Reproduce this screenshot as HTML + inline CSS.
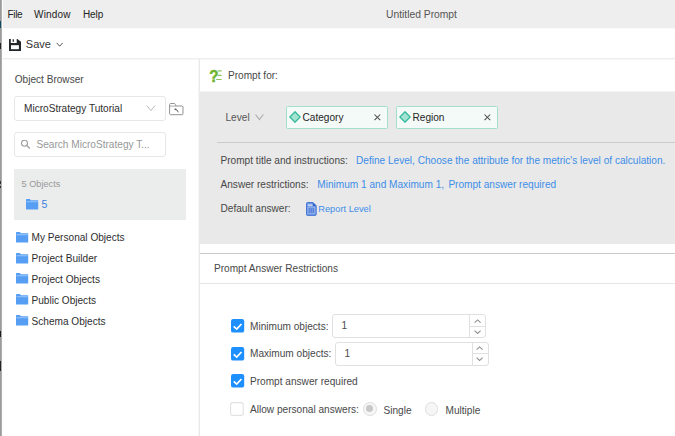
<!DOCTYPE html>
<html><head><meta charset="utf-8"><title>Untitled Prompt</title>
<style>
html,body{margin:0;padding:0;}
body{width:675px;height:436px;overflow:hidden;background:#fff;position:relative;font-family:"Liberation Sans",Arial,sans-serif;font-size:10px;color:#484848;}
.a{position:absolute;white-space:nowrap;}
.t{position:absolute;white-space:nowrap;line-height:12px;font-size:10.1px;}
.blue{color:#3d8de8;}
.dk{color:#2e2e2e;}
.box{position:absolute;box-sizing:border-box;border:1px solid #e7e7e7;border-radius:3px;background:#fff;}
.chip{position:absolute;box-sizing:border-box;border:1px solid #a4dfca;border-radius:1.5px;background:#f4faf8;}
.cb{position:absolute;box-sizing:border-box;width:14px;height:14px;border-radius:2px;background:#1b8cf8;}
</style></head><body>
<!-- menu bar -->
<div class="a" style="left:3px;top:0;width:672px;height:28px;background:#eeeeee;"></div><div class="a" style="left:3px;top:28px;width:672px;height:1px;background:#fafafa;"></div>
<div class="t" id="m1" style="left:7.5px;top:9px;font-size:10px;color:#222;letter-spacing:-0.35px;">File</div>
<div class="t" id="m2" style="left:34px;top:9px;font-size:10px;color:#222;letter-spacing:0.2px;">Window</div>
<div class="t" id="m3" style="left:83px;top:9px;font-size:10px;color:#222;letter-spacing:-0.1px;">Help</div>
<div class="t" id="ttl" style="left:386px;top:9px;font-size:10.3px;color:#555;">Untitled Prompt</div>
<!-- toolbar -->
<div class="a" style="left:2px;top:58px;width:673px;height:1px;background:#ededed;"></div><div class="a" style="left:2px;top:59px;width:673px;height:1px;background:#f8f8f8;"></div>
<svg class="a" style="left:9px;top:38.5px;" width="12" height="12" viewBox="0 0 12 12"><path d="M0 0H8.4L12 2.8V12H0Z" fill="#24272a"/><rect x="1.8" y="-0.2" width="5.9" height="4.2" fill="#fff"/><rect x="3.6" y="0.3" width="1.4" height="2.5" fill="#3a3d40"/><rect x="2" y="6.2" width="7.9" height="4" fill="#fff"/></svg>
<div class="t" id="save" style="left:25.8px;top:38px;font-size:11px;color:#333;">Save</div>
<svg class="a" style="left:56.2px;top:42.3px;" width="8" height="6" viewBox="0 0 8 6"><path d="M0.7 0.9L3.7 4.2L6.7 0.9" fill="none" stroke="#555" stroke-width="1"/></svg>
<!-- left edge -->
<div class="a" style="left:0;top:0;width:1px;height:436px;background:#9b9b9b;"></div><div class="a" style="left:1px;top:0;width:1px;height:436px;background:#adadad;"></div><div class="a" style="left:2px;top:0;width:1px;height:436px;background:#fdfdfd;"></div>
<div class="a" style="left:0;top:21px;width:1px;height:7px;background:#0f4b60;"></div>
<div class="a" style="left:0;top:43px;width:1px;height:6px;background:#222;"></div>
<div class="a" style="left:0;top:181px;width:1px;height:3px;background:#333;"></div>
<div class="a" style="left:0;top:186px;width:1px;height:2px;background:#333;"></div>
<div class="a" style="left:0;top:331px;width:1px;height:6px;background:#1c1c1c;"></div>
<div class="a" style="left:0;top:361px;width:1px;height:10px;background:#222;"></div>
<!-- sidebar -->
<div class="a" style="left:198px;top:59px;width:1px;height:377px;background:#f6f6f6;"></div><div class="a" style="left:199px;top:59px;width:1px;height:377px;background:#e9e9e9;"></div>
<div class="t" id="ob" style="left:14.7px;top:74px;">Object Browser</div>
<div class="box" style="left:14px;top:96px;width:152px;height:25px;"></div>
<div class="t dk" id="mst" style="left:24px;top:103px;">MicroStrategy Tutorial</div>
<svg class="a" style="left:146px;top:105.4px;" width="10" height="7" viewBox="0 0 10 7"><path d="M0.8 0.6L4.9 5.6L9 0.6" fill="none" stroke="#bbb" stroke-width="1"/></svg>
<svg class="a" style="left:169px;top:102.5px;" width="15" height="13" viewBox="0 0 15 13"><path d="M0.6 1.5q0-1 1-1h3.6q0.8 0 1.2 0.9l0.6 1.6h6q1 0 1 1v6.7q0 1-1 1H1.6q-1 0-1-1z" fill="none" stroke="#939393" stroke-width="1"/><path d="M0.6 3.1H7" fill="none" stroke="#939393" stroke-width="0.8"/><path d="M5.6 6.3q3-0.3 3.6 3" fill="none" stroke="#666" stroke-width="1"/><path d="M5.3 6.3l1.8-1.3v2.6z" fill="#666"/></svg>
<div class="box" style="left:14px;top:132px;width:152px;height:25px;"></div>
<svg class="a" style="left:21px;top:140px;" width="10" height="10" viewBox="0 0 10 10"><circle cx="3.5" cy="3.2" r="3" fill="none" stroke="#9c9c9c" stroke-width="1.1"/><path d="M5.7 5.4L8.8 8.5" stroke="#9c9c9c" stroke-width="1.3"/></svg>
<div class="t" id="srch" style="left:36.5px;top:139px;color:#989898;">Search MicroStrategy T...</div>
<div class="a" style="left:14px;top:169px;width:172px;height:51px;background:#ebecec;"></div>
<div class="t" id="o5" style="left:21.5px;top:178px;font-size:9.2px;color:#999;">5 Objects</div>
<div class="t" id="n5" style="left:41.5px;top:198px;font-size:10.5px;color:#3a7fe0;">5</div>
<!-- folders -->
<svg width="0" height="0" style="position:absolute"><defs><g id="fld"><path d="M0 0.7q0-0.7 0.7-0.7h2.9q0.6 0 0.8 0.5l0.3 0.7h6.9q0.6 0 0.6 0.6v8.2q0 0.5-0.5 0.5H0.5q-0.5 0-0.5-0.5z" fill="#559ef4"/><rect x="0.5" y="2" width="11.2" height="1.3" fill="#8abcf7"/></g></defs></svg>
<svg class="a" style="left:25.9px;top:198.6px;" width="13" height="11" viewBox="0 0 13 11"><use href="#fld"/></svg>
<svg class="a" style="left:15.9px;top:231.5px;" width="13" height="11" viewBox="0 0 13 11"><use href="#fld"/></svg>
<svg class="a" style="left:15.9px;top:252.5px;" width="13" height="11" viewBox="0 0 13 11"><use href="#fld"/></svg>
<svg class="a" style="left:15.9px;top:273.4px;" width="13" height="11" viewBox="0 0 13 11"><use href="#fld"/></svg>
<svg class="a" style="left:15.9px;top:294.4px;" width="13" height="11" viewBox="0 0 13 11"><use href="#fld"/></svg>
<svg class="a" style="left:15.9px;top:315.3px;" width="13" height="11" viewBox="0 0 13 11"><use href="#fld"/></svg>
<div class="t dk" id="f1" style="left:31.5px;top:232px;">My Personal Objects</div>
<div class="t dk" id="f2" style="left:31.5px;top:253px;">Project Builder</div>
<div class="t dk" id="f3" style="left:31.5px;top:274px;">Project Objects</div>
<div class="t dk" id="f4" style="left:31.5px;top:295px;">Public Objects</div>
<div class="t dk" id="f5" style="left:31.5px;top:316px;">Schema Objects</div>
<!-- main -->
<svg class="a" style="left:210px;top:69.5px;overflow:visible" width="12" height="13" viewBox="0 0 12 13"><text x="-0.9" y="11.9" font-family="Liberation Sans, Arial, sans-serif" font-weight="bold" font-size="16.5" fill="#6cb52f" stroke="#6cb52f" stroke-width="0.5" transform="scale(0.92,1)">?</text><path d="M8 0.9H11.6M8 5.4H11.6M6.2 9.5H11.6" stroke="#86c558" stroke-width="1.1"/></svg>
<div class="t" id="pf" style="left:228px;top:70px;">Prompt for:</div>
<div class="a" style="left:199px;top:91px;width:476px;height:1px;background:#f4f4f4;"></div>
<div class="a" style="left:199px;top:92px;width:476px;height:152px;background:#e9e9e9;"></div>
<div class="t" id="lvl" style="left:225.5px;top:112px;color:#555;">Level</div>
<svg class="a" style="left:254.7px;top:113.8px;" width="9" height="7" viewBox="0 0 9 7"><path d="M0.5 0.5L4.4 5.6L8.3 0.5" fill="none" stroke="#ababab" stroke-width="1.1"/></svg>
<div class="chip" style="left:286px;top:106px;width:102px;height:23px;"></div>
<svg class="a" style="left:289px;top:111.4px;" width="12" height="12" viewBox="0 0 12 12"><path d="M6 0.8L11.2 6L6 11.2L0.8 6Z" fill="#a3e3d2" stroke="#31b89a" stroke-width="1.3"/></svg>
<div class="t" id="cat" style="left:302.5px;top:112px;color:#262626;">Category</div>
<svg class="a" style="left:374px;top:114px;" width="7" height="7" viewBox="0 0 7 7"><path d="M0.5 0.5L6.2 6.2M6.2 0.5L0.5 6.2" stroke="#4a4a4a" stroke-width="1.05"/></svg>
<div class="chip" style="left:395.7px;top:106px;width:102px;height:23px;"></div>
<svg class="a" style="left:398.6px;top:111.4px;" width="12" height="12" viewBox="0 0 12 12"><path d="M6 0.8L11.2 6L6 11.2L0.8 6Z" fill="#a3e3d2" stroke="#31b89a" stroke-width="1.3"/></svg>
<div class="t" id="reg" style="left:412.5px;top:112px;color:#262626;">Region</div>
<svg class="a" style="left:483.7px;top:114px;" width="7" height="7" viewBox="0 0 7 7"><path d="M0.5 0.5L6.2 6.2M6.2 0.5L0.5 6.2" stroke="#4a4a4a" stroke-width="1.05"/></svg>
<div class="a" style="left:216.5px;top:142px;width:459px;height:1px;background:#cbcbcb;"></div>
<div class="t" id="r1" style="left:220.5px;top:155px;">Prompt title and instructions:</div>
<div class="t blue" id="r1b" style="left:356px;font-size:10.1px;top:155px;">Define Level, Choose the attribute for the metric's level of calculation.</div>
<div class="t" id="r2" style="left:220.5px;top:179px;">Answer restrictions:</div>
<div class="t blue" id="r2b" style="left:317.3px;top:179px;">Minimum 1 and Maximum 1,</div>
<div class="t blue" id="r2c" style="left:448.4px;top:179px;">Prompt answer required</div>
<div class="t" id="r3" style="left:220.5px;top:203px;">Default answer:</div>
<svg class="a" style="left:305.8px;top:202px;" width="11" height="14" viewBox="0 0 11 14"><path d="M0.5 1.4q0-0.9 0.9-0.9H7L10.2 3.7V12.5q0 0.9-0.9 0.9H1.4q-0.9 0-0.9-0.9z" fill="#7099e2" stroke="#4676d6" stroke-width="1"/><path d="M6.8 0.6L10.2 4H7.6q-0.8 0-0.8-0.8z" fill="#2f60c8"/><rect x="1.9" y="2.4" width="4.6" height="1.7" fill="#c7d6f3"/><rect x="2" y="5.3" width="6.8" height="6.2" fill="#5c86dc" stroke="#a4bcee" stroke-width="0.7"/><path d="M4.3 5.4V11.4M6.5 5.4V11.4" stroke="#7fa0e4" stroke-width="0.6"/></svg>
<div class="t blue" id="rl" style="left:318.3px;top:203px;font-size:9.25px;">Report Level</div>
<!-- restrictions -->
<div class="a" style="left:200px;top:252.5px;width:475px;height:1px;background:#c9c9c9;"></div>
<div class="t" id="par" style="left:214px;top:263px;">Prompt Answer Restrictions</div>
<div class="a" style="left:200px;top:283px;width:475px;height:1px;background:#e6e6e6;"></div>

<svg class="a" style="left:230.7px;top:318.8px;" width="14" height="14" viewBox="0 0 14 14"><rect x="0" y="0" width="13.2" height="13.6" rx="2.2" fill="#1e8fff"/><path d="M2.7 7.4L5.7 10.1L10.5 5" fill="none" stroke="#fff" stroke-width="1.7"/></svg>
<svg class="a" style="left:230.7px;top:346.7px;" width="14" height="14" viewBox="0 0 14 14"><rect x="0" y="0" width="13.2" height="13.6" rx="2.2" fill="#1e8fff"/><path d="M2.7 7.4L5.7 10.1L10.5 5" fill="none" stroke="#fff" stroke-width="1.7"/></svg>
<svg class="a" style="left:230.7px;top:374.4px;" width="14" height="14" viewBox="0 0 14 14"><rect x="0" y="0" width="13.2" height="13.6" rx="2.2" fill="#1e8fff"/><path d="M2.7 7.4L5.7 10.1L10.5 5" fill="none" stroke="#fff" stroke-width="1.7"/></svg>
<svg class="a" style="left:230.2px;top:402.2px;" width="15" height="15" viewBox="0 0 15 15"><rect x="0.6" y="0.6" width="12.6" height="12.8" rx="2.2" fill="#fff" stroke="#e2e2e2" stroke-width="1.1"/></svg>

<div class="t" id="mn" style="left:250px;top:321px;">Minimum objects:</div>
<div class="t" id="mx" style="left:250px;top:348px;">Maximum objects:</div>
<div class="t" id="pr" style="left:250px;top:376px;">Prompt answer required</div>
<div class="t" id="al" style="left:250px;top:404px;">Allow personal answers:</div>

<div class="box" style="left:332.2px;top:314.2px;width:153.6px;height:23.4px;border-color:#e0e0e0;"></div>
<div class="a" style="left:469px;top:315px;width:1px;height:22px;background:#e0e0e0;"></div>
<div class="a" style="left:469px;top:325.5px;width:16px;height:1px;background:#e0e0e0;"></div>
<svg class="a" style="left:473.6px;top:318.6px;" width="8" height="5" viewBox="0 0 8 5"><path d="M0.6 3.7L3.6 0.9L6.6 3.7" fill="none" stroke="#909090" stroke-width="1.1"/></svg>
<svg class="a" style="left:473.6px;top:329.9px;" width="8" height="5" viewBox="0 0 8 5"><path d="M0.6 0.7L3.6 3.5L6.6 0.7" fill="none" stroke="#909090" stroke-width="1.1"/></svg>
<div class="t" id="i1" style="left:341.6px;top:320px;color:#4c4c4c;">1</div>

<div class="box" style="left:334.8px;top:341.8px;width:154px;height:24.4px;border-color:#e0e0e0;"></div>
<div class="a" style="left:472px;top:342.6px;width:1px;height:23px;background:#e0e0e0;"></div>
<div class="a" style="left:472px;top:353.2px;width:16px;height:1px;background:#e0e0e0;"></div>
<svg class="a" style="left:476.3px;top:345.8px;" width="8" height="5" viewBox="0 0 8 5"><path d="M0.6 3.7L3.6 0.9L6.6 3.7" fill="none" stroke="#909090" stroke-width="1.1"/></svg>
<svg class="a" style="left:476.3px;top:357.4px;" width="8" height="5" viewBox="0 0 8 5"><path d="M0.6 0.7L3.6 3.5L6.6 0.7" fill="none" stroke="#909090" stroke-width="1.1"/></svg>
<div class="t" id="i2" style="left:344.6px;top:348px;color:#4c4c4c;">1</div>

<div class="a" style="left:363px;top:402px;width:13.6px;height:13.6px;box-sizing:border-box;border:1px solid #dedede;border-radius:50%;background:#f6f6f6;"></div>
<div class="a" style="left:366.4px;top:405.4px;width:6.8px;height:6.8px;border-radius:50%;background:#c8c8c8;"></div>
<div class="t" id="sg" style="left:383.5px;top:405px;">Single</div>
<div class="a" style="left:424.7px;top:402px;width:13.6px;height:13.6px;box-sizing:border-box;border:1px solid #dedede;border-radius:50%;background:#f6f6f6;"></div>
<div class="t" id="ml" style="left:445.5px;top:405px;">Multiple</div>
</body></html>
